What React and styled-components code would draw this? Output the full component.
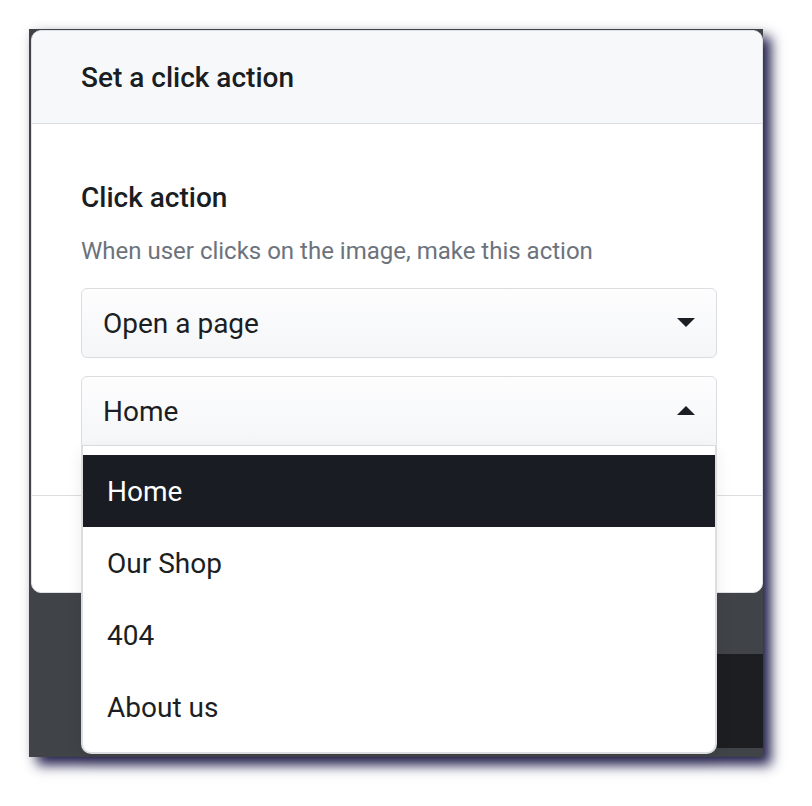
import styled, { createGlobalStyle } from "styled-components";

const GlobalStyle = createGlobalStyle`
    * {
        box-sizing: border-box;
    }
    body {
        margin: 0;
        background: #FFF;
        font-family: Roboto, "Liberation Sans", sans-serif;
    }
`;

const pages = ["Home", "Our Shop", "404", "About us"];

const App = () => {
    const selected = "Home";

    return (
        <Page>
            <GlobalStyle />
            <Frame>
                <Modal>
                    <ModalHeader>
                        <h1>Set a click action</h1>
                    </ModalHeader>
                    <ModalBody>
                        <Label>Click action</Label>
                        <Hint>When user clicks on the image, make this action</Hint>
                        <Select>
                            <span>Open a page</span>
                            <Caret />
                        </Select>
                        <SelectWrap>
                            <Select open>
                                <span>{selected}</span>
                                <Caret up />
                            </Select>
                            <Menu>
                                {pages.map((p) => (
                                    <Option key={p} active={p === selected}>{p}</Option>
                                ))}
                            </Menu>
                        </SelectWrap>
                    </ModalBody>
                    <ModalFooter />
                </Modal>
                <Backdrop>
                    <DarkBar />
                </Backdrop>
            </Frame>
        </Page>
    );
};

const Page = styled.div`
    padding: 29px 0 0 29px;
    height: 806px;
`;

const Frame = styled.div`
    width: 734px;
    height: 728px;
    background: #404347;
    display: flex;
    flex-direction: column;
    box-shadow: 0 0 10px rgba(0, 0, 0, 0.08), 8px 8px 12px #23214F;
`;

const Modal = styled.div`
    margin: 1px 0 0 2px;
    width: 732px;
    height: 563px;
    background: #FFF;
    border: 1px solid #E0E1E5;
    border-radius: 10px;
    display: flex;
    flex-direction: column;
`;

const ModalHeader = styled.div`
    height: 93px;
    background: #F7F8FA;
    border-bottom: 1px solid #DCDDE1;
    border-radius: 10px 10px 0 0;
    display: flex;
    align-items: center;
    padding-left: 49px;

    h1 {
        margin: 0;
        font-size: 28px;
        font-weight: 500;
        color: #1A1D21;
    }
`;

const ModalBody = styled.div`
    height: 371px;
    padding: 57px 45px 0 49px;
    display: flex;
    flex-direction: column;
`;

const Label = styled.h2`
    margin: 0;
    font-size: 28px;
    line-height: 1.2;
    font-weight: 500;
    color: #1A1D21;
`;

const Hint = styled.p`
    margin: 18px 0 0;
    font-size: 24px;
    line-height: 36px;
    color: #6C737C;
`;

const SelectWrap = styled.div`
    position: relative;
    margin-top: 18px;
`;

const Select = styled.div`
    margin-top: ${(props) => (props.open ? "0" : "19px")};
    height: 70px;
    border: 1px solid #DCDDE1;
    border-radius: ${(props) => (props.open ? "6px 6px 0 0" : "6px")};
    background: linear-gradient(#FDFDFE, #F5F6F8);
    display: flex;
    align-items: center;
    justify-content: space-between;
    padding: 2px 21px 0;
    font-size: 28px;
    color: #1B1E22;
`;

const Caret = styled.i`
    width: 0;
    height: 0;
    margin-top: -2px;
    border-left: 9px solid transparent;
    border-right: 9px solid transparent;
    border-top: ${(props) => (props.up ? "0" : "9px solid #1B1E22")};
    border-bottom: ${(props) => (props.up ? "9px solid #1B1E22" : "0")};
`;

const Menu = styled.ul`
    position: absolute;
    top: 100%;
    left: 0;
    right: 0;
    margin: 0;
    padding: 9px 0;
    list-style: none;
    background: #FFF;
    border: 2px solid #DCDDE1;
    border-top: none;
    border-radius: 0 0 10px 10px;
    box-shadow: 0 6px 16px rgba(0, 0, 0, 0.08);
    z-index: 2;
`;

const Option = styled.li`
    height: 72px;
    display: flex;
    align-items: center;
    padding: 2px 0 0 24px;
    font-size: 28px;
    background: ${(props) => (props.active ? "#191C22" : "#FFF")};
    color: ${(props) => (props.active ? "#FFF" : "#1B1E22")};
`;

const ModalFooter = styled.div`
    flex: 1;
    border-top: 1px solid #DCDDE1;
`;

const Backdrop = styled.div`
    flex: 1;
    padding: 61px 0 9px;
    display: flex;
    justify-content: flex-end;
`;

const DarkBar = styled.div`
    width: 420px;
    background: #1C1E21;
`;

export default App;
